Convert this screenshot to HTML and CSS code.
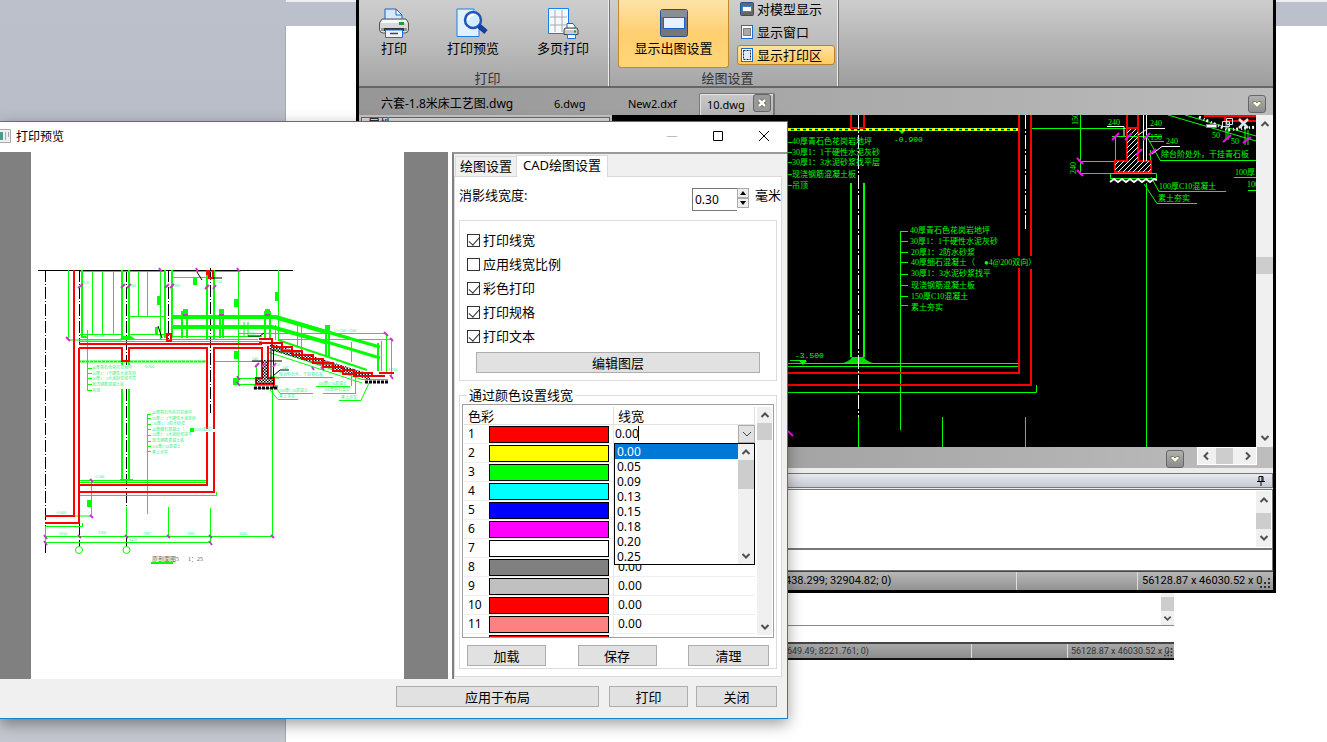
FILE: index.html
```html
<!DOCTYPE html>
<html lang="zh-CN">
<head>
<meta charset="utf-8">
<title>打印预览</title>
<link rel="stylesheet" href="styles.css">
</head>
<body>
<svg class="defs" aria-hidden="true">
  <symbol id="up" viewBox="0 0 10 10"><path d="M1.500 7L5 3.500 8.500 7" fill="none" stroke="#505050" stroke-width="2"/></symbol>
  <symbol id="down" viewBox="0 0 10 10"><path d="M1.500 3L5 6.500 8.500 3" fill="none" stroke="#505050" stroke-width="2"/></symbol>
  <symbol id="left" viewBox="0 0 10 10"><path d="M7 1.500L3.500 5 7 8.500" fill="none" stroke="#505050" stroke-width="2"/></symbol>
  <symbol id="right" viewBox="0 0 10 10"><path d="M3 1.500L6.500 5 3 8.500" fill="none" stroke="#505050" stroke-width="2"/></symbol>
  <symbol id="heart" viewBox="0 0 10 10"><path d="M1 2.500H3.500L5 4 6.500 2.500H9V4.500L5 8.500 1 4.500Z" fill="#fff" stroke="#85804a"/></symbol>
  <symbol id="grip" viewBox="0 0 12 12"><path d="M8 0h2v2h-2zM8 4h2v2h-2zM4 4h2v2h-2zM8 8h2v2h-2zM4 8h2v2h-2zM0 8h2v2h-2z" fill="#333"/></symbol>
  <symbol id="printer" viewBox="0 0 30 30">
    <path d="M6 1H17L23 7V13H6Z" fill="#d7e9ff" stroke="#1464c8"/><path d="M17 1V7H23Z" fill="#fff" stroke="#1464c8"/>
    <path d="M3 11H27L29.500 15V22Q29 25 26 25H4Q1 25 .5 22V15Z" fill="#d9d9d9" stroke="#555"/>
    <path d="M3 12H27L28 15H2Z" fill="#fafafa"/><path d="M2 20H28V23H2Z" fill="#999"/>
    <rect x="20" y="14" width="5" height="3" fill="#18a030"/>
    <path d="M5 20H25V23H5Z" fill="#333"/><path d="M6.500 22H23.500V29.500H6.500Z" fill="#eaf5ff" stroke="#1470d8"/><path d="M11 25.500H19" stroke="#445" stroke-width="1.500"/>
  </symbol>
</svg>

<main class="desktop">
  <div class="paper-top"></div>
  <div class="paper"></div>

  <section class="back-window" aria-label="后台窗口">
    <div class="back-log"><div class="vscroll back-scroll"><i class="thumb"></i><svg class="ic"><use href="#down"/></svg></div></div>
    <div class="back-input"></div>
    <footer class="back-status"><span class="cell grow">649.49; 8221.761; 0)</span><span class="cell mid"></span><span class="cell last">56128.87 x 46030.52 x 0</span><svg class="grip"><use href="#grip"/></svg></footer>
  </section>

  <section class="cad" aria-label="CAD">
    <header class="ribbon">
      <div class="group print-group">
        <div class="tools">
          <button class="tool"><svg class="big" viewBox="0 0 30 30"><use href="#printer"/></svg>打印</button>
          <button class="tool"><svg class="big" viewBox="0 0 30 30"><path d="M-1 1H16L21 6V28.500H-1Z" fill="#e3effd" stroke="#1a80e8"/><path d="M16 1V6H21" fill="#fff" stroke="#1a80e8"/><circle cx="15" cy="12" r="8" fill="#d5ebff" stroke="#1d56c0" stroke-width="2.500"/><path d="M10 12Q11 7 16 7" fill="none" stroke="#fff" stroke-width="2"/><path d="M21 18L28 24" stroke="#153f9c" stroke-width="5"/></svg>打印预览</button>
          <button class="tool"><svg class="big" viewBox="0 0 30 30"><path d="M.5.500H20.500V25.500H.5Z" fill="#f4f8ff" stroke="#1a80e8"/><path d="M7 2V24M14 2V24M2 9H19M2 17H19" stroke="#aaa"/><path d="M19 15.500H25L27 18V21H19Z" fill="#fff" stroke="#1464c8"/><path d="M17 20H29L30 22V26.500H16V22Z" fill="#ccc" stroke="#444"/><path d="M18 21.500H28" stroke="#fff"/><path d="M26 23.500H28" stroke="#18a030" stroke-width="2"/><path d="M19.500 26.500H27.500V30.500H19.500Z" fill="#fff" stroke="#1470d8"/></svg>多页打印</button>
        </div>
        <div class="group-name">打印</div>
      </div>
      <div class="group plot-group">
        <div class="tools">
          <button class="tool active"><svg class="big" viewBox="0 0 30 30"><rect x="1.500" y="1.500" width="27" height="27" rx="2" fill="#777" stroke="#1d4f9e"/><path d="M2 2H28V9H2Z" fill="#888d96"/><rect x="4.500" y="9.500" width="21" height="11" fill="#e8f2ff" stroke="#1b63c9"/></svg>显示出图设置</button>
          <div class="stack">
            <button class="small"><svg class="sm" viewBox="0 0 14 14"><rect x=".5" y=".5" width="13" height="13" rx="1" fill="#666" stroke="#274f8e"/><rect x="2.500" y="4.500" width="9" height="5" fill="#fff" stroke="#3c82dc"/></svg>对模型显示</button>
            <button class="small"><svg class="sm" viewBox="0 0 14 14"><rect x="1.500" y=".5" width="11" height="13" fill="#fff" stroke="#1470d8"/><rect x="3.500" y="3.500" width="7" height="7" fill="#aaa" stroke="#222" stroke-dasharray="1 1"/></svg>显示窗口</button>
            <button class="small on"><svg class="sm" viewBox="0 0 14 14"><rect x="1.500" y=".5" width="11" height="13" fill="#fff" stroke="#1470d8"/><rect x="3.500" y="2.500" width="7" height="9" fill="#dbe9ff" stroke="#222" stroke-dasharray="2 1"/></svg>显示打印区</button>
          </div>
        </div>
        <div class="group-name">绘图设置</div>
      </div>
    </header>
    <nav class="doc-tabs">
      <a class="doc long" href="#">六套-1.8米床工艺图.dwg</a><a class="doc six" href="#">6.dwg</a><a class="doc new" href="#">New2.dxf</a>
      <span class="doc current">10.dwg<button class="tab-close" aria-label="关闭标签"><svg viewBox="0 0 12 12"><path d="M3 3L9 9M9 3L3 9" stroke="#6a5d45" stroke-width="4"/><path d="M3 3L9 9M9 3L3 9" stroke="#fff" stroke-width="2.500"/></svg></button></span>
      <button class="chip" aria-label="标签列表"><svg><use href="#heart"/></svg></button>
    </nav>
    <div class="work">
      <aside class="props"><div class="props-title">属性</div></aside>
      <div class="canvas">
        <svg class="model" viewBox="612 115 644 332" aria-label="图纸">
          <defs><pattern id="wh" width="5" height="5" patternUnits="userSpaceOnUse"><path d="M-1 6L6 -1M-1 1L1 -1M4 6L6 4" stroke="#fff" stroke-width="1"/></pattern></defs>
          <g class="g"><path d="M788 130.500H1018M1032 128.500H1126M788 363.500H1020M788 366.500H1020M788 392.500H1036.500V385M900.500 231V430M942.500 417V447M1025.500 417V447M858.500 417V447M1146.500 183V447M1080.500 115V175M1080 161.500H1115M1080 173.500H1112M1110.500 173.500H1156.500V178.500H1110.500ZM1115.500 136V161M1112 136.500H1162M1150.500 150V166M1160 160.500H1256M1147 137L1160 160M1151 177L1159 191.500H1226M1144 184L1157 203.500H1197M1234 177.500H1256M1248 190.500H1256M1168 115L1256 141M1185 115L1256 136M1226 121V140M1228 121V140M1245 130V145M1248 130V145M1149 141.500H1164M900 231.500H908M900 241.500H908M900 252.500H908M900 262.500H908M900 274.500H908M900 285.500H908M900 296.500H908M900 305.500H908M788 142.500H792M788 152.500H792M788 162.500H792M788 174.500H792M788 185.500H792M790 360.500H806"/></g>
          <g class="g fat"><path d="M851 183V357M864 183V357"/></g>
          <path d="M843 363Q850 361 852 357H864Q866 361 873 363Z" fill="#0d0"/>
          <path d="M898 130L902 134 906 130ZM799 361L803 365 807 361Z" fill="#0f0"/>
          <path d="M788 128.500H1018" stroke="#0ff"/><path d="M788 129.500H1018" stroke="#ff0" stroke-width="3" stroke-dasharray="3 3"/>
          <g class="r"><path d="M851 115V128H864V115M1019 115V256M1019 268V373H788M1031 115V256M1031 269V385H788M1127 115V161H1115V172H1151V161H1138V115M1127 128H1138M1204 116H1256M1225 116V121H1256"/></g>
          <path d="M1127 129H1138V161H1151V172H1115V161H1127Z" fill="url(#wh)"/>
          <g class="w"><path stroke-dasharray="14 2 2 2" d="M858.500 115V417M1025.500 115V229"/><path d="M1107 126.500H1124V136M1138 135L1148 128.500H1165M1152 154L1162 146.500H1180M1143.500 115V161M1146.500 115V161"/><path stroke-width="2" d="M1110 182L1114 179 1118 182 1122 179 1126 182 1130 179 1134 182 1138 179 1142 182 1146 179 1150 182 1154 179 1157 180"/><path stroke-width="3" stroke-dasharray="2 3 1 2" d="M1199 117L1228 130L1256 127"/></g>
          <g class="m"><path d="M1077 158L1083 164M1077 170L1083 176M1112 140L1119 133M1125 140L1132 133M1143 140L1150 133M1136 155L1142 149M1149 155L1156 149M1223 142L1231 135M1243 143L1251 137M788 431L793 436"/></g>
          <g class="cad-text">
            <text x="792" y="144">40厚青石色花岗岩地坪</text><text x="792" y="155">30厚1：1干硬性水泥灰砂</text><text x="792" y="165">30厚1：3水泥砂浆找平层</text><text x="792" y="177">现浇钢筋混凝土板</text><text x="792" y="188">吊顶</text>
            <text class="level" x="894" y="142">-0.900</text><text class="level" x="795" y="358">-3.500</text>
            <text x="910" y="233">40厚青石色花岗岩地坪</text><text x="910" y="244">30厚1：1干硬性水泥灰砂</text><text x="911" y="255">20厚1：2防水砂浆</text><text x="911" y="265">40厚细石混凝土（</text><text x="984" y="265">●4@200双向）</text><text x="911" y="276">30厚1：3水泥砂浆找平</text><text x="911" y="288">现浇钢筋混凝土板</text><text x="911" y="299">150厚C10混凝土</text><text x="911" y="310">素土夯实</text>
            <text x="1108" y="125">240</text><text x="1150" y="126">240</text><text x="1150" y="140">150</text><text x="1166" y="144">240</text><text x="1161" y="157">除台阶处外，干挂青石板</text><text x="1159" y="189">100厚C10混凝土</text><text x="1158" y="201">素土夯实</text><text x="1235" y="175">100厚</text><text x="1247" y="187">100</text><text x="1212" y="138">50</text><text x="1231" y="144">50</text>
            <text transform="translate(1078 125) rotate(-90)">150</text><text transform="translate(1076 174) rotate(-90)">240</text>
          </g>
          <path d="M1206.500 124.500H1216.500V127.500H1206.500Z" fill="#fff" stroke="#889"/><path d="M1226.500 118.500H1232.500V124.500H1226.500ZM1222.500 121.500H1229.500V126.500H1222.500Z" fill="none" stroke="#dde"/><path d="M1239 119L1248 128M1248 119L1239 128" stroke="#dde4ee" stroke-width="2.500"/>
        </svg>
      </div>
      <div class="vscroll main-scroll"><svg class="ic"><use href="#up"/></svg><i class="thumb"></i><svg class="ic"><use href="#down"/></svg></div>
    </div>
    <div class="layout-bar"><button class="chip" aria-label="布局列表"><svg><use href="#heart"/></svg></button><div class="hscroll"><svg class="ic"><use href="#left"/></svg><i class="thumb"></i><svg class="ic"><use href="#right"/></svg></div></div>
    <div class="dock-title"><svg class="pin" viewBox="0 0 8 10"><path d="M2 .5H6V5.500H2ZM0 5.500H8M4 6V10M5 1V5" fill="none" stroke="#000"/></svg></div>
    <div class="log"><textarea aria-label="命令记录" readonly></textarea><div class="vscroll log-scroll"><svg class="ic"><use href="#up"/></svg><i class="thumb"></i><svg class="ic"><use href="#down"/></svg></div></div>
    <input class="command" aria-label="命令">
    <footer class="status"><span class="cell grow">438.299; 32904.82; 0)</span><span class="cell mid"></span><span class="cell last">56128.87 x 46030.52 x 0</span><svg class="grip"><use href="#grip"/></svg></footer>
  </section>

  <section class="dialog" role="dialog" aria-labelledby="dlg-title">
    <header class="titlebar">
      <svg class="app-icon" viewBox="0 0 11 14"><path d="M-2 .5H10.500V13.500H-2" fill="#eee" stroke="#aaa"/><path d="M0 3H3V11H0Z" fill="#4c9a88"/><path d="M5 3H6V11H5ZM8 3H9V8H8Z" fill="#9ab"/></svg>
      <h1 id="dlg-title">打印预览</h1>
      <button class="win" aria-label="最小化"><svg viewBox="0 0 12 12"><path d="M1 6.500H11" stroke="#bbb"/></svg></button>
      <button class="win" aria-label="最大化"><svg viewBox="0 0 12 12"><path d="M1.500 1.500H10.500V10.500H1.500Z" fill="none" stroke="#000"/></svg></button>
      <button class="win" aria-label="关闭窗口"><svg viewBox="0 0 12 12"><path d="M1 1L11 11M11 1L1 11" stroke="#000"/></svg></button>
    </header>
    <div class="body">
      <div class="preview"><div class="sheet">
        <svg class="plan" viewBox="31 152 373 527" aria-label="打印预览图">
          <defs><pattern id="bh" width="3" height="3" patternUnits="userSpaceOnUse"><path d="M0 0H1.500V1.500H0ZM1.500 1.500H3V3H1.500Z" fill="#000"/></pattern></defs>
          <g class="k"><path d="M38 270.500H293"/><path stroke-dasharray="12 2 1 2" d="M45.500 270V553M79.500 270V345M79.500 523V547M126.500 270V365M126.500 389V508M126.500 536V548M168.500 270V340M210.500 268V413"/></g>
          <g class="g"><path d="M68.500 270V340H122M92.500 271V334M102.500 271V334M113.500 271V334M80 334.500H122M138.500 271V316M147.500 271V316M129 316.500H165M160.500 271V340M80 271.500H164M172 271.500H238.500V384M278.500 270V340M172 277.500H207M129 334.500H165M79 339.500H258M172 336.500H262M79 341.500H262M87.500 330V390M87 368.500H92M87 373.500H92M87 378.500H92M87 384.500H92M87 390.500H92M79 480.500H207M79 482.500H207M79 495.500H216.500V492M147.500 414V514M147 414.500H151M147 418.500H151M147 424.500H151M147 429.500H151M147 435.500H151M147 441.500H151M147 446.500H151M147 451.500H151M91.500 480V516H75M45 526.500H82.500V523M45 536.500H272.500V388M45 542.500H211M126.500 507V538M168.500 507V536M210.500 508V542M45.500 526V542M214 361.500H262M238 333.500H386M386.500 333V373M278 339.500H392M391.500 340V377M238 378.500H255M238 384.500H255M256.500 365V378M274 378H279M253.500 385.500H277.500V388.500H253.500M268 348L362 379.500H388M268 352L362 383M270 376L278 377.500H333M275 386L280 393.500H313M270 390L278 399.500H298M316 386.500H350M323 393.500H356M339 400.500H361L369 383M351.500 372V386M355.500 372V393M275.500 325V340M297.500 325V347M301.500 325V350M351.500 342V362M381.500 341V371M244 322V336M248 322V336"/></g>
          <g class="g fat"><path d="M82 270V338M122 270V338M129 270V338M165 270V338M172 270V338M207 270V340M214 270V340M122 389V479M129 389V479M122 361V365M129 361V365M326 326V357M329 326V357M182 311V338M187 311V338M220 311V338M223 311V338M265 311V338M270 311V338M378 343V371"/></g>
          <g class="rails"><path d="M172 317H275L327 332.500M172 327H272L327 342.500"/><path d="M327 332L380 347M327 342L380 358" stroke-width="3"/><path d="M278 340L367 370M276 316L350 338" stroke-width="2"/></g>
          <path d="M157 296h4v9h-4zM234 299h4v8h-4zM275 292h4v9h-4zM234 351h4v8h-4zM233 378h5v7h-5zM87 500h4v7h-4zM155 327h3v7h-3zM193 277h4v8h-4zM183 309h5v5h-5zM219 309h5v5h-5zM265 309h5v5h-5zM325 325h5v5h-5zM120 479h13v2h-13zM80 338l3-2h3l2 2zM120 339l3-3h8l4 3z" fill="#0f0"/>
          <path d="M79 361.500H207" stroke="#0f0" stroke-width="2"/><path d="M79 361.500H207" stroke="#0cf" stroke-dasharray="2 2"/><path d="M81 361.500H207" stroke="#fe0" stroke-width="2" stroke-dasharray="1 3"/>
          <g class="r"><path d="M74 270V516H45M79 348V523H45M79 344H262M79 348H122V361H129V348H207V485H79M214 485V348H262V378H256V384H274V378H268V346M79 492H214V430M207 270V275M209 270V278H213V270M167 334H171V341H167ZM379 373H394"/></g>
          <path d="M256 378H274V384H256ZM262 360H268V378H262ZM270 343L370 374V380L270 350Z" fill="url(#bh)"/>
          <path d="M259 339H272V343H282V347H292V351H302V355H313V359H323V363H333V367H343V370H354V373H372V376H385" fill="none" stroke="#e00" stroke-width="2"/>
          <path d="M259 343H272V347H282V351H292V355H302V359H313V363H323V367H333V371H343V374H354V376H372" fill="none" stroke="#e00" stroke-width="2"/>
          <path d="M206 429h10v3h-10z" fill="#fff"/>
          <g class="k"><path stroke-width="3" stroke-dasharray="3 1" d="M254 388H277"/><path stroke-width="3" stroke-dasharray="3 1" d="M365 382H388"/><path d="M197 272L202 280M158 326L162 338M252 361H262M248 336H260L264 333M268 361H282M273 376L280 370H289M213 278H222M271 350V378M273.500 350V388"/></g>
          <g class="m"><path d="M78 288L83 284M121 288L125 284M127 288L131 284M165 288L169 284M170 288L174 284M205 289L209 285M213 289L216 285M66 337L70 341M237 268L240 272M159 268L162 272M196 268L198 272M237 376L240 380M237 382L240 386M384 332L388 336M390 338L393 341M390 375L393 379M255 367L259 363M262 367L265 363M273 367L276 363M312 367L314 370M321 367L324 370M90 479L93 482M90 515L93 518M44 535L47 539M44 541L47 545M78 535L81 538M125 535L128 538M167 535L170 538M209 535L212 538M271 535L274 538M209 541L212 545M183 315H188M219 315H224M265 315H270"/></g>
          <g fill="#fff" stroke="#0f0"><circle cx="79" cy="550" r="3.500"/><circle cx="126.500" cy="550" r="3.500"/></g>
          <g class="tiny"><text x="92" y="369">40厚青石色花岗岩地坪</text><text x="92" y="375">30厚1：1干硬性水泥灰砂</text><text x="92" y="380">30厚1：3水泥砂浆找平层</text><text x="92" y="386">现浇钢筋混凝土板</text><text x="92" y="392">吊顶</text><text x="144" y="368">-0.900</text><text x="94" y="478">-3.500</text><text x="56" y="514">-6.000</text><text x="95" y="337">0.000</text>
            <text x="152" y="414">40厚青石色花岗岩地坪</text><text x="152" y="420">30厚1：1干硬性水泥灰砂</text><text x="153" y="425">20厚1：2防水砂浆</text><text x="152" y="431">40厚细石混凝土（</text><text x="189" y="431">●4@200双向）</text><text x="152" y="436">30厚1：3水泥砂浆找平</text><text x="152" y="442">现浇钢筋混凝土板</text><text x="152" y="448">150厚C10混凝土</text><text x="152" y="454">素土夯实</text>
            <text x="59" y="535">1650</text><text x="98" y="534">2360</text><text x="143" y="535">1987</text><text x="187" y="535">1981</text><text x="239" y="535">3000</text><text x="129" y="541">8450</text><text x="279" y="376">除台阶处外，干挂青石板</text><text x="279" y="392">100厚C10混凝土</text><text x="279" y="398">素土夯实</text><text x="318" y="385">100厚C10混凝土</text><text x="324" y="391">100厚碎石垫层</text><text x="341" y="399">素土夯实</text><text x="334" y="332">11×300=3300</text><text x="83" y="284">120</text><text x="130" y="287">600</text><text x="174" y="287">600</text><text x="216" y="283">150</text><text x="252" y="360">240</text><text x="274" y="366">150</text><text x="282" y="369">240</text><text x="387" y="371">-1.700</text><text x="249" y="335">900</text></g>
          <path d="M190 428h4v4h-4z" fill="#0f0"/>
          <g class="drawing-name"><text x="152" y="561">原剖面图5</text><text x="188" y="561">1：25</text></g><path d="M151 563H173" stroke="#0f0" stroke-width="2"/>
        </svg>
      </div></div>
      <div class="panel">
        <div class="tabs" role="tablist"><button class="tab" role="tab">绘图设置</button><button class="tab sel" role="tab" aria-selected="true">CAD绘图设置</button></div>
        <div class="page">
          <div class="width-row"><label for="hide-w">消影线宽度:</label><input id="hide-w" class="num" value="0.30"><span class="spin"><button aria-label="增加"><svg viewBox="0 0 6 4"><path d="M0 4L3 0 6 4Z"/></svg></button><button aria-label="减少"><svg viewBox="0 0 6 4"><path d="M0 0L3 4 6 0Z"/></svg></button></span><span class="unit">毫米</span></div>
          <div class="box checks">
            <label><input type="checkbox" checked>打印线宽</label>
            <label><input type="checkbox">应用线宽比例</label>
            <label><input type="checkbox" checked>彩色打印</label>
            <label><input type="checkbox" checked>打印规格</label>
            <label><input type="checkbox" checked>打印文本</label>
            <button class="btn layers">编辑图层</button>
          </div>
          <fieldset class="box colors">
            <legend>通过颜色设置线宽</legend>
            <div class="grid">
              <div class="rows">
                <table>
                  <thead><tr><th colspan="2">色彩</th><th>线宽</th></tr></thead>
                  <tbody>
                    <tr><td class="n">1</td><td><i class="sw red"></i></td><td class="edit"><div class="combo"><input aria-label="线宽" value="0.00"><i class="caret"></i><button aria-label="展开"><svg viewBox="0 0 10 10"><path d="M1 3L5 7 9 3" fill="none" stroke="#444"/></svg></button>
                      <div class="drop"><ul role="listbox" aria-label="线宽"><li role="option" aria-selected="true" class="pick">0.00</li><li role="option">0.05</li><li role="option">0.09</li><li role="option">0.13</li><li role="option">0.15</li><li role="option">0.18</li><li role="option">0.20</li><li role="option">0.25</li></ul><div class="vscroll"><svg class="ic"><use href="#up"/></svg><i class="thumb"></i><svg class="ic"><use href="#down"/></svg></div></div></div></td></tr>
                    <tr><td class="n">2</td><td><i class="sw yellow"></i></td><td></td></tr>
                    <tr><td class="n">3</td><td><i class="sw green"></i></td><td></td></tr>
                    <tr><td class="n">4</td><td><i class="sw cyan"></i></td><td></td></tr>
                    <tr><td class="n">5</td><td><i class="sw blue"></i></td><td></td></tr>
                    <tr><td class="n">6</td><td><i class="sw magenta"></i></td><td></td></tr>
                    <tr><td class="n">7</td><td><i class="sw white"></i></td><td></td></tr>
                    <tr><td class="n">8</td><td><i class="sw gray"></i></td><td>0.00</td></tr>
                    <tr><td class="n">9</td><td><i class="sw silver"></i></td><td>0.00</td></tr>
                    <tr><td class="n">10</td><td><i class="sw red"></i></td><td>0.00</td></tr>
                    <tr><td class="n">11</td><td><i class="sw pink"></i></td><td>0.00</td></tr>
                    <tr><td class="n"></td><td><i class="sw red"></i></td><td></td></tr>
                  </tbody>
                </table>
              </div>
              <div class="vscroll grid-scroll"><svg class="ic"><use href="#up"/></svg><i class="thumb"></i><svg class="ic"><use href="#down"/></svg></div>
            </div>
            <div class="file-row"><button class="btn">加载</button><button class="btn">保存</button><button class="btn clear">清理</button></div>
          </fieldset>
        </div>
      </div>
    </div>
    <footer class="actions"><button class="btn wide">应用于布局</button><button class="btn">打印</button><button class="btn close">关闭</button></footer>
  </section>
</main>
</body>
</html>
```
FILE: styles.css
```css
*{box-sizing:border-box}
body{margin:0;font:13px/16px "Noto Sans","Noto Sans CJK SC",sans-serif;color:#000;overflow:hidden}
button,input,textarea{font:inherit;color:inherit;margin:0;padding:0;border:0;background:none;border-radius:0;outline:0}
a{color:inherit;text-decoration:none}
svg{display:block;flex:none}
.defs{position:absolute;width:0;height:0}
.desktop{position:relative;height:100vh;min-height:742px;overflow:hidden;background:linear-gradient(#bcc0cb,#b9bdc8 18%,#bfc3cc 70%,#c4c7cf)}
.paper-top{position:absolute;left:286px;right:0;top:0;height:2px;background:#eceef2}
.paper{position:absolute;left:285px;right:0;top:26px;bottom:0;background:#fff;border-left:1px solid #a5a9b3}

/* scroll bars */
.vscroll{display:flex;flex-direction:column;align-items:center;justify-content:space-between;background:#f0f0f0;width:15px;flex:none}
.vscroll .thumb{width:100%;background:#cdcdcd}
.ic{width:10px;height:10px;margin:4px 0}

/* window at the back */
.back-window{position:absolute;left:600px;right:153px;top:560px;background:#fff;font-family:Roboto,"Noto Sans CJK SC",sans-serif;font-size:9px;color:#333}
.back-log{display:flex;justify-content:flex-end;height:66px;border-bottom:1px solid #888}
.back-scroll{width:13px;justify-content:flex-end}
.back-scroll .thumb{height:14px}
.back-scroll .ic{margin:3px 0 2px;width:9px;height:9px}
.back-input{height:16px}
.back-status{display:flex;height:18px;border-top:2px solid #444;border-bottom:2px solid #111;background:linear-gradient(#a8a8a8,#8d8d8d);line-height:14px;position:relative}
.back-status .cell.grow{padding-left:187px}
.back-status .cell.mid{width:96px}
.back-status .cell.last{width:107px;padding-left:3px}
.back-status .grip{right:0;width:10px;height:10px}

.cell{padding-left:4px;white-space:nowrap}
.cell.grow{flex:1}
.cell+.cell{border-left:1px solid #ddd}
.grip{position:absolute;right:1px;bottom:0;width:12px;height:12px}

/* CAD window */
.cad{position:absolute;left:356px;right:51px;top:0;border:solid #000;border-width:0 3px 3px;display:flex;flex-direction:column;background:#ececec}
.ribbon{display:flex;height:88px;background:linear-gradient(#cdcdcd,#b9b9b9 40%,#9e9e9e);border-bottom:2px solid #666}
.group{display:flex;flex-direction:column;justify-content:space-between;border-right:1px solid #eee;box-shadow:1px 0 #777;background:linear-gradient(#cecece,#bcbcbc 50%,#a6a6a6)}
.print-group{width:250px}
.plot-group{width:228px;margin-left:1px}
.tools{display:flex}
.print-group .tools{padding:8px 8px 0 9px;justify-content:space-between}
.tool{display:flex;flex-direction:column;align-items:center;gap:2px;white-space:nowrap}
.print-group .tool:first-child{width:52px}
.print-group .tool:nth-child(2){width:64px}
.print-group .tool:nth-child(3){width:74px}
.big{width:30px;height:30px;overflow:visible}
.active{width:111px;height:68px;margin-left:8px;padding-top:8px;border:1px solid #c08a2e;border-top:0;border-radius:0 0 3px 3px;background:linear-gradient(#fbe3a8,#ffcf70 50%,#ffd578)}
.stack{display:flex;flex-direction:column;gap:3px;margin-left:8px}
.small{display:flex;align-items:center;gap:3px;height:20px;width:98px;padding-left:2px;border:1px solid transparent;border-radius:3px}
.small:first-child{margin-top:-1px}
.small.on{border-color:#b8822a;background:linear-gradient(#ffe3a0,#ffcb62)}
.sm{width:14px;height:14px}
.group-name{padding-left:8px;text-align:center;line-height:16px;color:#333}
.doc-tabs{display:flex;height:27px;padding-top:5px;background:linear-gradient(90deg,#969696,#bcbcbc);font-size:11px;line-height:22px}
.long{font-size:12px;margin-left:22px;width:173px;white-space:nowrap}
.six{width:74px}
.new{width:71px}
.current{display:flex;justify-content:space-between;width:76px;padding:0 2px 0 7px;background:linear-gradient(#c9c9c9,#b5b5b5);border:solid #777;border-width:1px 2px 0 1px;border-radius:2px 2px 0 0;box-shadow:inset 1px 1px #e4e4e4}
.tab-close{width:18px;height:18px;border:1px solid #666;border-radius:3px;background:#999}
.tab-close svg{width:12px;height:12px;margin:auto}
.chip{display:flex;align-items:center;justify-content:center;width:18px;height:18px;border:1px solid #666;border-radius:3px;background:linear-gradient(#b0b0b0,#8c8c8c)}
.chip svg{width:10px;height:10px}
.doc-tabs .chip{margin:2px 7px 0 auto;height:18px}
.work{display:flex;height:332px}
.props{width:253px;flex:none;background:#c4c4c4;overflow:hidden}
.props-title{margin:2px;padding-left:6px;border:1px solid #666;background:linear-gradient(#ddd,#bbb);font-size:12px;line-height:14px}
.canvas{flex:1;background:#000;overflow:hidden}
.model{width:644px;height:332px}
.main-scroll{width:17px}
.main-scroll .thumb{height:17px;margin-top:124px;margin-bottom:auto}
.g{fill:none;stroke:#0f0;stroke-width:1}
.fat{stroke-width:2}
.r{fill:none;stroke:#f00;stroke-width:2}
.w{fill:none;stroke:#fff}
.k{fill:none;stroke:#000}
.m{fill:none;stroke:#f0f;stroke-width:2}
.plan .m{stroke:#c3c}
.cad-text{font:8px "Liberation Serif","Noto Sans CJK SC",serif;fill:#0f0}
.level{font-family:"Liberation Mono",monospace}
.layout-bar{display:flex;justify-content:flex-end;height:21px;background:linear-gradient(90deg,#8d8d8d,#bdbdbd)}
.layout-bar .chip{margin:3px 13px 0 0}
.hscroll{display:flex;justify-content:space-between;width:60px;height:18px;margin-right:16px;background:#f0f0f0;border:1px solid #fff}
.hscroll .ic{margin:3px}
.hscroll .thumb{width:17px;margin-right:5px;background:#cdcdcd}
.dock-title{height:15px;margin-top:5px;border:1px solid #777;background:linear-gradient(#e8ebef,#c5c9d2)}
.pin{width:8px;height:10px;margin:2px 7px 0 auto}
.log{display:flex;height:60px;margin-top:1px;padding:1px;background:#fff;border:1px solid #777}
.log textarea{flex:1;resize:none}
.log-scroll .thumb{height:17px;margin-top:4px}
.command{height:22px;border:1px solid #777;background:#fff}
.status{display:flex;position:relative;height:19px;border-top:1px solid #444;background:linear-gradient(#b7b7b7,#929292);font:11px/17px Roboto,"Noto Sans CJK SC",sans-serif}
.status .grow{padding-left:426px}
.status .mid{width:121px}
.status .last{width:136px}

/* print preview dialog */
.dialog{position:absolute;left:0;top:121px;width:788px;display:flex;flex-direction:column;background:#fff;border:solid #1a80d0;border-width:1px 1px 1px 0;box-shadow:0 5px 14px rgba(0,0,0,.38)}
.titlebar{display:flex;align-items:center;height:30px;padding-bottom:2px}
.titlebar h1{flex:1;margin:0 0 0 5px;font:12px/16px "Noto Sans CJK SC",sans-serif}
.app-icon{width:11px;height:14px}
.win{width:46px;height:28px}
.win svg{width:12px;height:12px;margin:auto}
.body{display:flex;height:527px}
.preview{display:flex;flex:1;background:#808080;padding:0 44px 0 31px}
.sheet{flex:1;background:#fff}
.plan{width:373px;height:527px}
.rails{fill:none;stroke:#0f0;stroke-width:4}
.tiny{font:4px "Liberation Serif","Noto Sans CJK SC",serif;fill:#3e8}
.drawing-name{font:6px "Liberation Serif","Noto Sans CJK SC",serif;fill:#665}
.panel{width:335px;margin-left:4px;padding:2px 5px 2px 0;display:flex;flex-direction:column;background:#f0f0f0;border-left:2px solid #808080;border-top:2px solid #999}
.tabs{display:flex;height:20px;align-items:flex-end}
.tab{height:20px;width:62px;margin-left:1px;padding-bottom:2px;border:1px solid #d9d9d9;border-bottom:0;background:#f0f0f0}
.tab.sel{height:22px;width:92px;margin:0 0 -1px -1px;padding-bottom:3px;background:#fff;position:relative}
.page{flex:1;display:flex;flex-direction:column;border:1px solid #d9d9d9;background:#fff;padding:10px 4px 7px}
.width-row{display:flex;align-items:flex-start;height:33px;margin-right:-4px}
.width-row label{flex:1}
.num{width:45px;height:23px;margin-top:1px;padding-left:2px;border:1px solid #777;border-right:0;font-size:12px}
.spin{display:flex;flex-direction:column;gap:0;width:12px;margin:1px 0 0}
.spin button{height:10px;border:1px solid #aaa;background:#eee}
.spin svg{width:6px;height:4px;margin:auto}
.unit{margin-left:6px;white-space:nowrap}
.box{border:1px solid #dcdcdc;margin:0;padding:0;min-width:0}
.checks{display:flex;flex-direction:column;gap:8px;padding:11px 16px 7px 7px}
.checks label{display:flex;align-items:center;gap:3px}
.checks input{appearance:none;width:13px;height:13px;border:1px solid #333;background:#fff}
.checks input:checked::after{content:"";display:block;width:9px;height:5px;margin:2px 0 0 1px;border:solid #333;border-width:0 0 1px 1px;transform:rotate(-48deg)}
.btn{height:21px;border:1px solid #adadad;background:#e1e1e1;line-height:18px}
.layers{margin-left:9px}
.colors{margin-top:6px;padding:1px 2px 2px;flex:1}
.colors legend{margin-left:5px;padding:0 2px;line-height:16px}
.grid{display:flex;height:234px;padding:2px 1px;border:1px solid #a0a0a0}
.rows{flex:1;overflow:hidden;height:230px}
table{width:100%;border-collapse:separate;border-spacing:0;table-layout:fixed;font-size:12px;line-height:16px}
th{font-size:13px;font-weight:400;text-align:left;height:18px;padding:0 4px;border-bottom:1px solid #e0e0e0;border-right:1px solid #e0e0e0}
th:first-child{width:150px}
td{height:19px;padding:0 0 0 4px;border-bottom:1px solid #eee}
td:nth-child(2){padding:0;border-right:1px solid #e8e8e8}
.n{width:26px}
.sw{display:block;width:120px;height:17px;border:1px solid #000;margin-left:-50px}
.red{background:#f00}.yellow{background:#ff0}.green{background:#0f0}.cyan{background:#0ff}.blue{background:#00f}.magenta{background:#f0f}.white{background:#fff}.gray{background:#808080}.silver{background:#c0c0c0}.pink{background:#ff8080}
.edit{padding:0}
.combo{position:relative;display:flex;height:18px}
.combo input{width:24px;padding-left:1px;flex:none}
.caret{width:1px;height:15px;margin-top:1px;background:#000}
.combo>button{width:17px;margin-left:auto;border:1px solid #aaa;background:#e1e1e1}
.combo>button svg{width:10px;height:10px;margin:auto}
.drop{position:absolute;left:0;right:0;top:18px;display:flex;height:122px;background:#fff;border:1px solid #000;z-index:2}
.drop ul{list-style:none;margin:0;padding:0;flex:1}
.drop li{height:15px;padding-left:2px;line-height:15px}
.drop .pick{background:#0078d7;color:#fff}
.drop .vscroll{width:16px}
.drop .thumb{height:29px;margin-bottom:auto}
.drop .ic{margin:3px 0}
.grid-scroll{margin-left:2px}
.grid-scroll .ic{margin:3px 0}
.grid-scroll .thumb{height:17px;margin-bottom:auto}
.file-row{display:flex;justify-content:space-between;padding:7px 5px 0}
.file-row .btn{width:79px}
.file-row .clear{width:81px}
.actions{display:flex;height:39px;padding:7px 10px 0;justify-content:flex-end;background:#f0f0f0}
.actions .btn{width:79px;margin-left:10px}
.actions .wide{width:203px}
.actions .close{width:81px;margin-left:8px}
```
